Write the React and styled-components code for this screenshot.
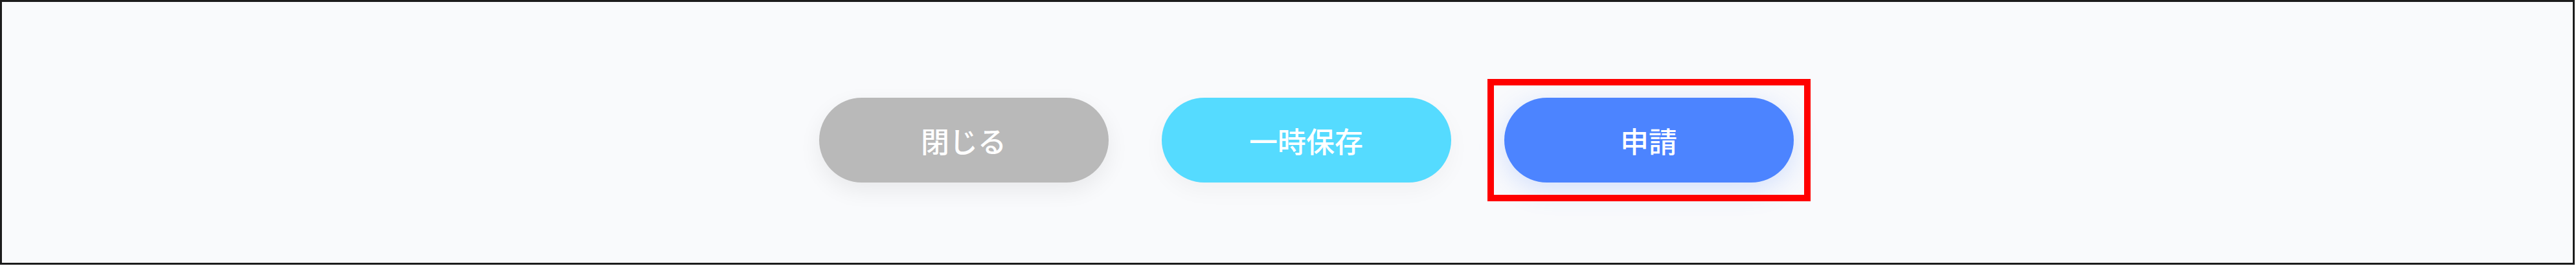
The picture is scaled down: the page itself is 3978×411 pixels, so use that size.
import React from 'react';
import styled, { createGlobalStyle } from 'styled-components';

const GlobalStyle = createGlobalStyle`
  html, body {
    margin: 0;
    padding: 0;
    background: #ffffff;
  }
  * {
    box-sizing: border-box;
  }
`;

const Frame = styled.div`
  width: 3976px;
  height: 409px;
  border: 3px solid #1c1c1c;
  background: #f9fafc;
  display: flex;
  justify-content: center;
  align-items: center;
  padding: 24px 0 0 58px;
`;

const ButtonRow = styled.div`
  display: flex;
  align-items: center;
  gap: 82px;
`;

const colors = {
  close: { bg: '#b9b9b9', shadow: '0 12px 34px rgba(0, 0, 0, 0.07)' },
  save: { bg: '#55dbff', shadow: '0 12px 34px rgba(0, 0, 0, 0.04)' },
  apply: { bg: '#4c84ff', shadow: '0 10px 40px rgba(76, 132, 255, 0.22)' },
};

const Button = styled.button`
  width: 447px;
  height: 131px;
  border: none;
  border-radius: 66px;
  background: ${(p) => colors[p.$kind].bg};
  box-shadow: ${(p) => colors[p.$kind].shadow};
  color: #ffffff;
  font-family: "Noto Sans CJK JP", "Noto Sans", sans-serif;
  font-size: 44px;
  font-weight: 500;
  letter-spacing: 0;
  cursor: pointer;
  display: flex;
  align-items: center;
  justify-content: center;
`;

const Highlight = styled.div`
  position: relative;
`;

const RedBox = styled.div`
  position: absolute;
  left: -26px;
  right: -26px;
  top: -29px;
  bottom: -29px;
  border: 10px solid #ff0000;
  pointer-events: none;
`;

const App = () => {
  return (
    <>
      <GlobalStyle />
      <Frame>
        <ButtonRow>
          <Button $kind="close">閉じる</Button>
          <Button $kind="save">一時保存</Button>
          <Highlight>
            <Button $kind="apply">申請</Button>
            <RedBox />
          </Highlight>
        </ButtonRow>
      </Frame>
    </>
  );
};

export default App;
